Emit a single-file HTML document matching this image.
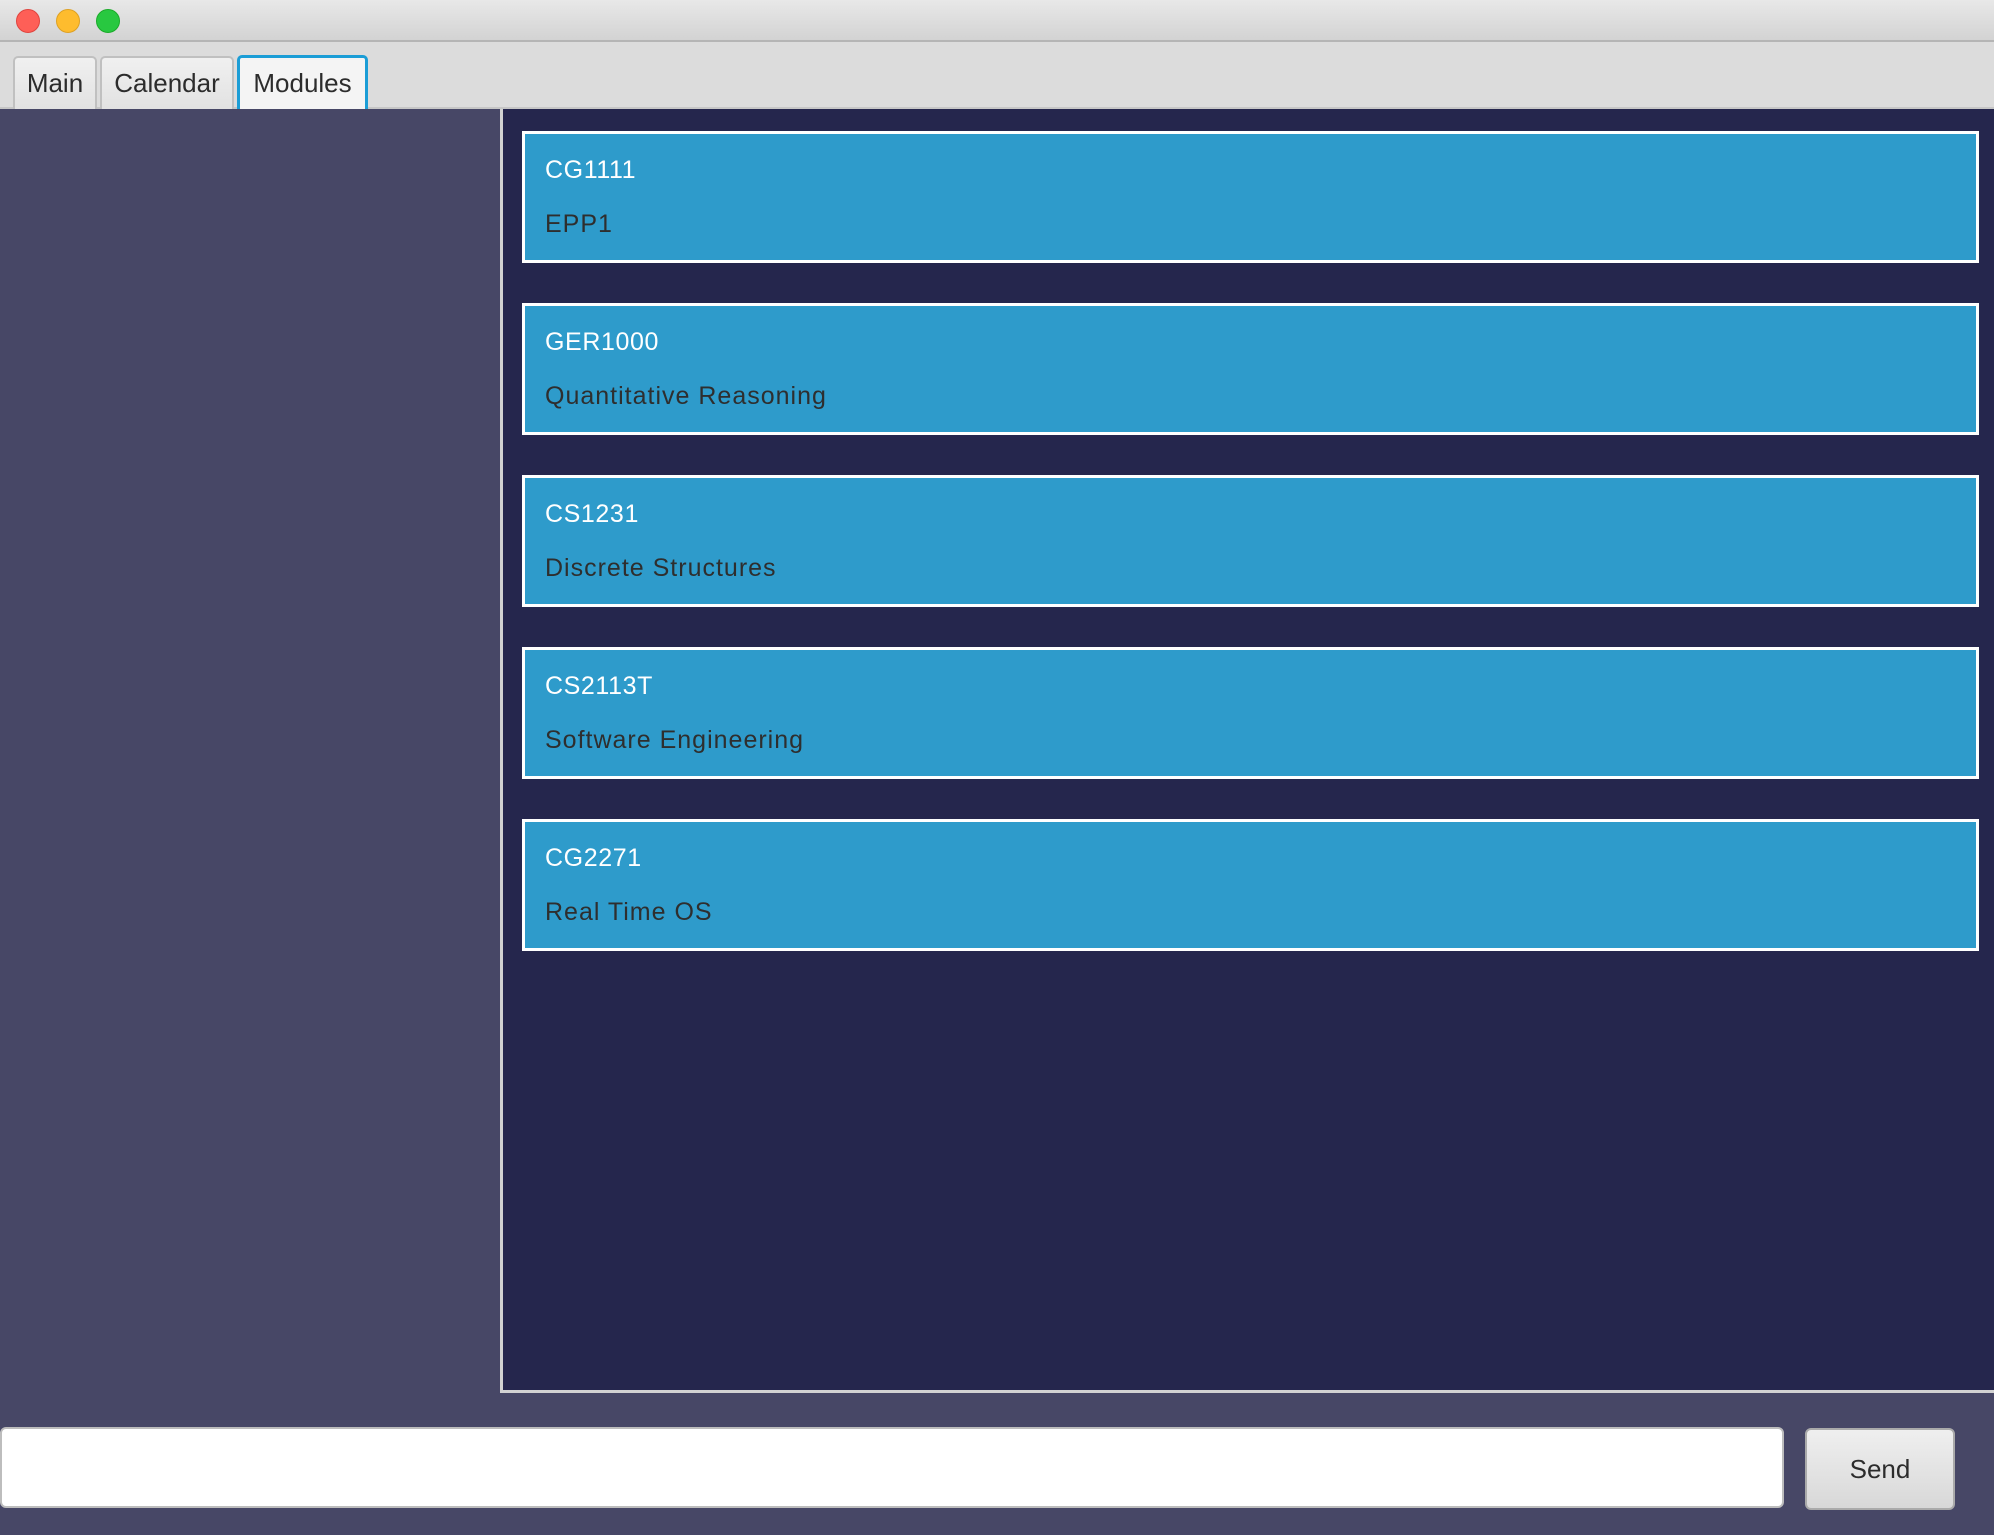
<!DOCTYPE html>
<html><head><style>
*{margin:0;padding:0;box-sizing:border-box}
body{width:1994px;height:1535px;background:#474766;font-family:"Liberation Sans",sans-serif;position:relative;overflow:hidden}
.title{position:absolute;left:0;top:0;width:1994px;height:42px;background:linear-gradient(#e8e8e8,#d3d3d3);border-bottom:2px solid #b5b5b5}
.dot{position:absolute;top:9px;width:24px;height:24px;border-radius:50%}
.tabbar{position:absolute;left:0;top:42px;width:1994px;height:67px;background:#dcdcdc;border-bottom:2px solid #c6c6c6}
.tab{position:absolute;top:14px;height:53px;border:2px solid #c0c0c0;border-bottom:none;border-radius:5px 5px 0 0;background:linear-gradient(#f0f0f0,#e2e2e2);font-size:26px;color:#2c2c2c;text-align:center;line-height:50px}
.tab.sel{border:3px solid #1b9dd6;border-bottom:none;background:#f4f4f4}
.left{position:absolute;left:0;top:109px;width:500px;height:1283px;background:#474766}
.panel{position:absolute;left:500px;top:109px;width:1494px;height:1284px;background:#25264d;border-left:3px solid #d2d2d2;border-bottom:3px solid #d2d2d2}
.card{position:absolute;left:522px;width:1457px;height:132px;background:#2e9bcb;border:3px solid #fff}
.code{position:absolute;left:20px;top:22px;font-size:25px;color:#fff;letter-spacing:0.6px}
.name{position:absolute;left:20px;top:76px;font-size:25px;color:#2e2e2e;letter-spacing:1px}
.input{position:absolute;left:0;top:1427px;width:1784px;height:81px;background:#fff;border:2px solid #bdbdbd;border-radius:6px}
.send{position:absolute;left:1805px;top:1428px;width:150px;height:82px;border:2px solid #aaa;border-radius:6px;background:linear-gradient(#efefef,#d8d8d8);font-size:26px;color:#2c2c2c;text-align:center;line-height:78px}
</style></head><body>
<div class="title">
<div class="dot" style="left:16px;background:#fe5f57;border:1px solid #e0443e"></div>
<div class="dot" style="left:56px;background:#febc2e;border:1px solid #dea123"></div>
<div class="dot" style="left:96px;background:#28c840;border:1px solid #1aab29"></div>
</div>
<div class="tabbar">
<div class="tab" style="left:13px;width:84px">Main</div>
<div class="tab" style="left:100px;width:134px">Calendar</div>
<div class="tab sel" style="left:237px;width:131px;top:13px;height:56px">Modules</div>
</div>
<div class="left"></div>
<div class="panel"></div>
<div class="card" style="top:131px"><div class="code">CG1111</div><div class="name">EPP1</div></div>
<div class="card" style="top:303px"><div class="code">GER1000</div><div class="name">Quantitative Reasoning</div></div>
<div class="card" style="top:475px"><div class="code">CS1231</div><div class="name">Discrete Structures</div></div>
<div class="card" style="top:647px"><div class="code">CS2113T</div><div class="name">Software Engineering</div></div>
<div class="card" style="top:819px"><div class="code">CG2271</div><div class="name">Real Time OS</div></div>
<div class="input"></div>
<div class="send">Send</div>
</body></html>
